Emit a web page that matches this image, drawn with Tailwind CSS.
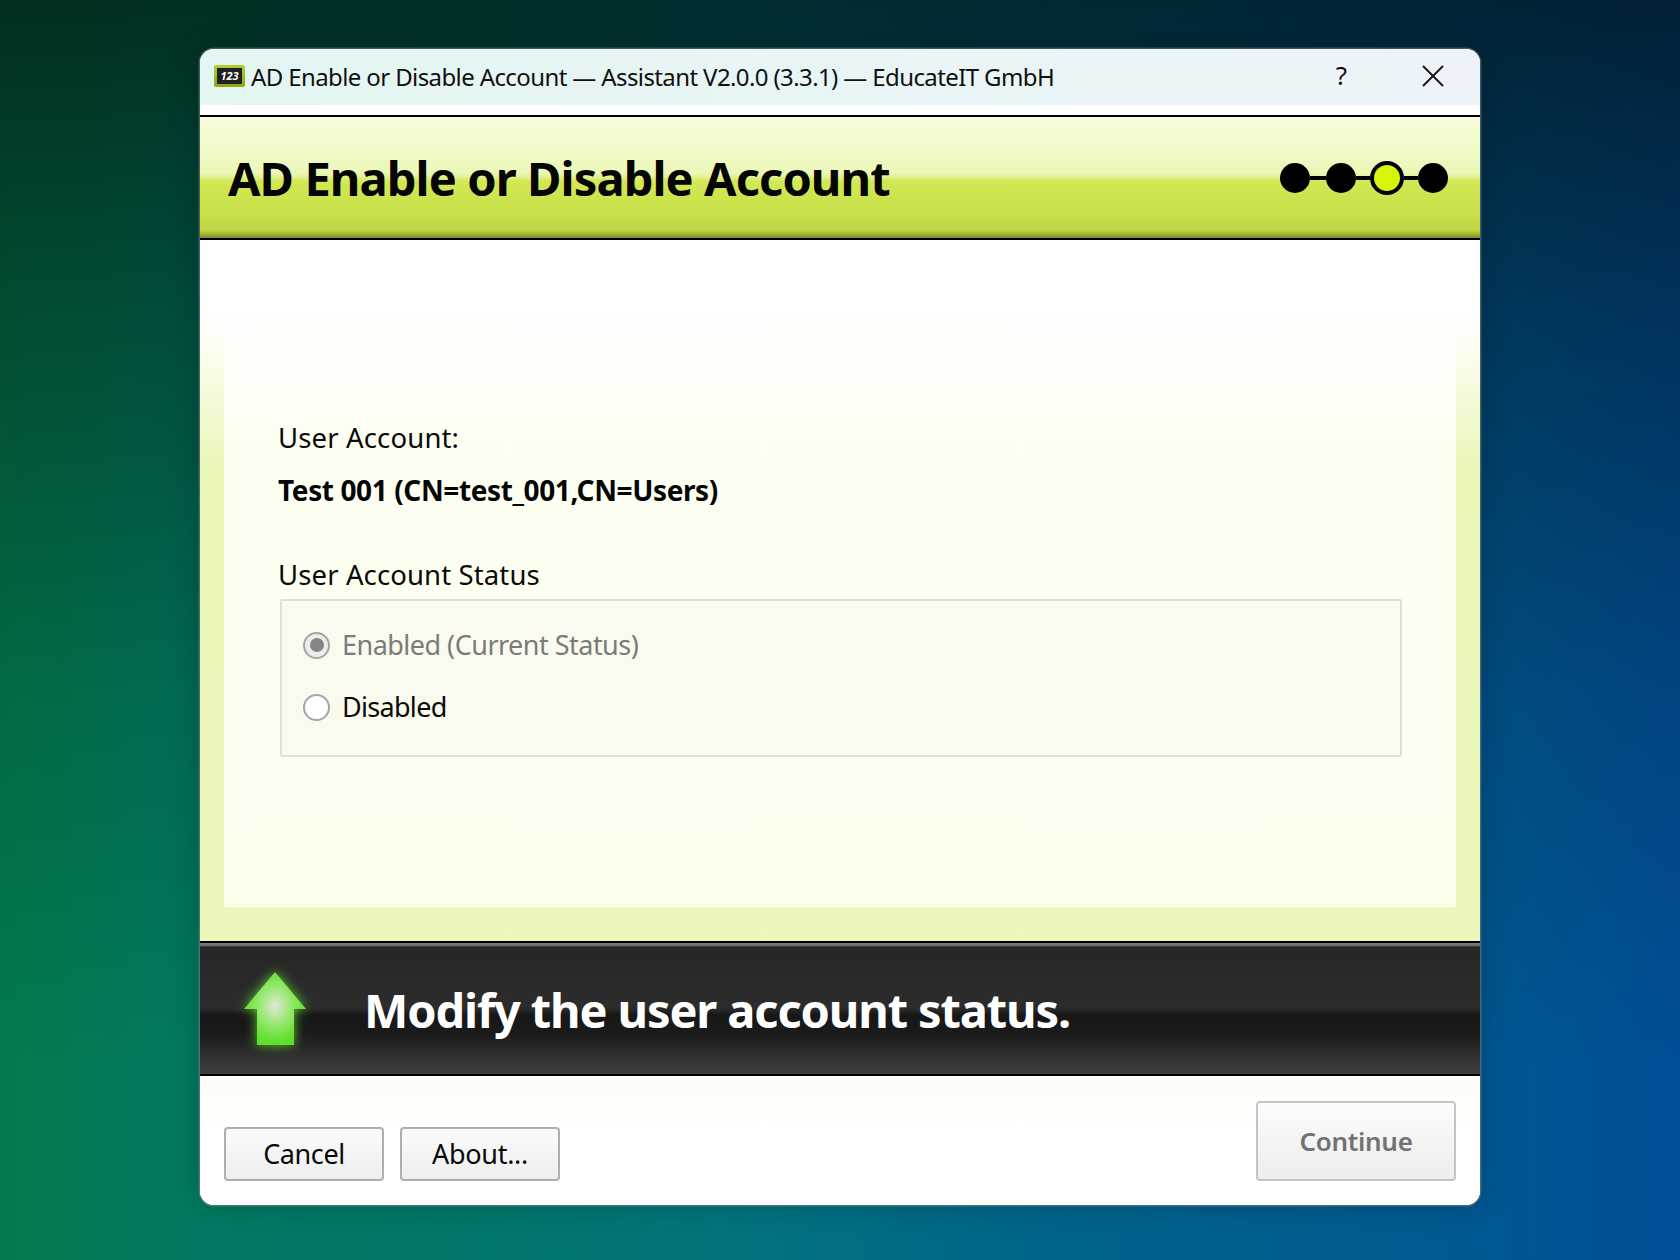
<!DOCTYPE html>
<html lang="en">
<head>
<meta charset="utf-8">
<title>AD Enable or Disable Account</title>
<script src="https://cdn.jsdelivr.net/npm/@tailwindcss/browser@4"></script>
</head>
<body class="w-[1680px] h-[1260px] overflow-hidden font-['Noto_Sans',sans-serif] bg-[linear-gradient(180deg,rgba(0,8,6,0.66)_0%,rgba(0,8,6,0.4)_25%,rgba(0,8,6,0.14)_55%,rgba(0,8,6,0)_85%),linear-gradient(90deg,#037a4c_0%,#02795f_10%,#00776a_28%,#01747c_43%,#00648a_62%,#005a90_85%,#014e95_100%)]">
  <div class="pt-[49px] pl-[200px]">
    <div class="w-[1280px] h-[1156px] rounded-[14px] bg-white overflow-hidden flex flex-col shadow-[0_0_0_1.5px_rgba(125,135,135,0.5),0_0_30px_rgba(0,0,0,0.22)]">

      <div class="h-[56px] shrink-0 flex items-center pl-[14px] pr-[36px] bg-[linear-gradient(90deg,#e3f6f2_0%,#e8f5f5_50%,#edf3f8_100%)]">
        <div class="w-[31px] h-[22px] rounded-[2px] bg-[linear-gradient(180deg,#b4d030,#8aa812)] p-[3px] shrink-0 flex -mt-[3px]">
          <div class="flex-1 bg-[#202020] flex items-center justify-center text-white text-[11px] leading-none font-bold italic">123</div>
        </div>
        <div class="ml-[6px] text-[24px] tracking-[-0.61px] text-[#111] whitespace-nowrap">AD Enable or Disable Account — Assistant V2.0.0 (3.3.1) — EducateIT GmbH</div>
        <div class="ml-auto text-[26px] text-[#111] leading-none mr-[75px] -mt-[4px]">?</div>
        <svg width="22" height="22" viewBox="0 0 22 22" class="-mt-[3px]"><path d="M1 1 21 21M21 1 1 21" stroke="#111" stroke-width="1.8" fill="none"/></svg>
      </div>
      <div class="h-[10px] shrink-0"></div>

      <div class="h-[125px] shrink-0 border-y-2 border-black flex items-center pl-[28px] pr-[32px] bg-[linear-gradient(180deg,#fafcde_0%,#ebf7b8_46%,#e4f39a_49%,#d3e854_53%,#c8e04a_80%,#bcd540_94%,#7f8f2c_100%)]">
        <div class="text-[47px] leading-none font-bold tracking-[-0.9px] text-[#050505] whitespace-nowrap mt-[2px]">AD Enable or Disable Account</div>
        <div class="ml-auto flex items-center">
          <div class="w-[30px] h-[30px] rounded-full bg-black"></div>
          <div class="w-[16px] h-[4px] bg-black"></div>
          <div class="w-[30px] h-[30px] rounded-full bg-black"></div>
          <div class="w-[14px] h-[4px] bg-black"></div>
          <div class="w-[34px] h-[34px] rounded-full bg-[#d6f50a] border-[4px] border-black"></div>
          <div class="w-[14px] h-[4px] bg-black"></div>
          <div class="w-[30px] h-[30px] rounded-full bg-black"></div>
        </div>
      </div>

      <div class="h-[701px] shrink-0 flex flex-col px-[24px] pb-[34px] bg-[linear-gradient(180deg,#ffffff_0%,#ffffff_11%,#ebf7b9_32%,#ecf7bb_100%)]">
        <div class="flex-1 px-[54px] pt-[180px] bg-[linear-gradient(180deg,#ffffff_0%,#ffffff_10%,#fdfff2_30%,#fcfeee_100%)]">
          <div class="text-[27.5px] leading-[36px] tracking-[0.15px] text-[#0a0a0a]">User Account:</div>
          <div class="mt-[16px] text-[28px] leading-[36px] font-bold tracking-[-0.39px] text-[#050505]">Test 001 (CN=test_001,CN=Users)</div>
          <div class="mt-[49px] text-[27.5px] leading-[36px] tracking-[0.12px] text-[#0a0a0a]">User Account Status</div>
          <div class="mt-[6px] ml-[2px] w-[1122px] h-[158px] border-2 border-[#dfe0d4] rounded-[2px] bg-[#fafbee] pl-[21px] pt-[13px]">
            <div class="flex items-center h-[62px]">
              <div class="w-[27px] h-[27px] rounded-full border-2 border-[#a4a4a4] bg-[#ececec] flex items-center justify-center"><div class="w-[14px] h-[14px] rounded-full bg-[#858585]"></div></div>
              <div class="ml-[12px] text-[27px] tracking-[-0.52px] text-[#7b7b7b]">Enabled (Current Status)</div>
            </div>
            <div class="flex items-center h-[62px]">
              <div class="w-[27px] h-[27px] rounded-full border-2 border-[#a4a4a4] bg-white"></div>
              <div class="ml-[12px] text-[27px] tracking-[-0.7px] text-[#0a0a0a]">Disabled</div>
            </div>
          </div>
        </div>
      </div>

      <div class="h-[135px] shrink-0 border-y-2 border-black flex items-center pl-[33px] bg-[linear-gradient(180deg,#808080_0%,#6a6a6a_2%,#262626_3%,#2c2c2c_48%,#2b2b2b_50%,#171717_55%,#1b1b1b_70%,#3d3d3d_97%,#3f3f3f_100%)]">
        <svg width="84" height="100" viewBox="0 0 84 100" class="shrink-0 mt-[3px]">
          <defs>
            <radialGradient id="arrowGlow" cx="0.5" cy="0.46" r="0.5">
              <stop offset="0" stop-color="#dfe8d8"/>
              <stop offset="0.55" stop-color="#93e86a"/>
              <stop offset="1" stop-color="#62de2e"/>
            </radialGradient>
            <filter id="arrowBlur" x="-30%" y="-30%" width="160%" height="160%"><feGaussianBlur stdDeviation="6"/></filter>
          </defs>
          <path d="M42 12 73 49H61V85H24V49H11Z" fill="#62de2e" opacity="0.9" filter="url(#arrowBlur)"/>
          <path d="M42 12 73 49H61V85H24V49H11Z" fill="url(#arrowGlow)"/>
        </svg>
        <div class="ml-[47px] text-[47px] leading-none font-bold tracking-[-1.13px] text-white whitespace-nowrap mt-[3px]">Modify the user account status.</div>
      </div>

      <div class="flex-1 flex items-end px-[24px] pb-[24px] bg-[linear-gradient(180deg,#fdfdf5_0%,#ffffff_35%)]">
        <button class="w-[160px] h-[54px] rounded-[4px] border-2 border-[#aeaeae] bg-[linear-gradient(180deg,#fbfbfb,#eeeeee)] text-[27px] tracking-[-0.4px] text-[#0a0a0a]">Cancel</button>
        <button class="ml-[16px] w-[160px] h-[54px] rounded-[4px] border-2 border-[#aeaeae] bg-[linear-gradient(180deg,#fbfbfb,#eeeeee)] text-[27px] tracking-[-0.3px] text-[#0a0a0a]">About...</button>
        <button class="ml-auto w-[200px] h-[80px] rounded-[4px] border-2 border-[#c4c4c4] bg-[linear-gradient(180deg,#fcfcfc,#ededed)] text-[26px] font-semibold tracking-[-0.3px] text-[#727272]">Continue</button>
      </div>
    </div>
  </div>
</body>
</html>
